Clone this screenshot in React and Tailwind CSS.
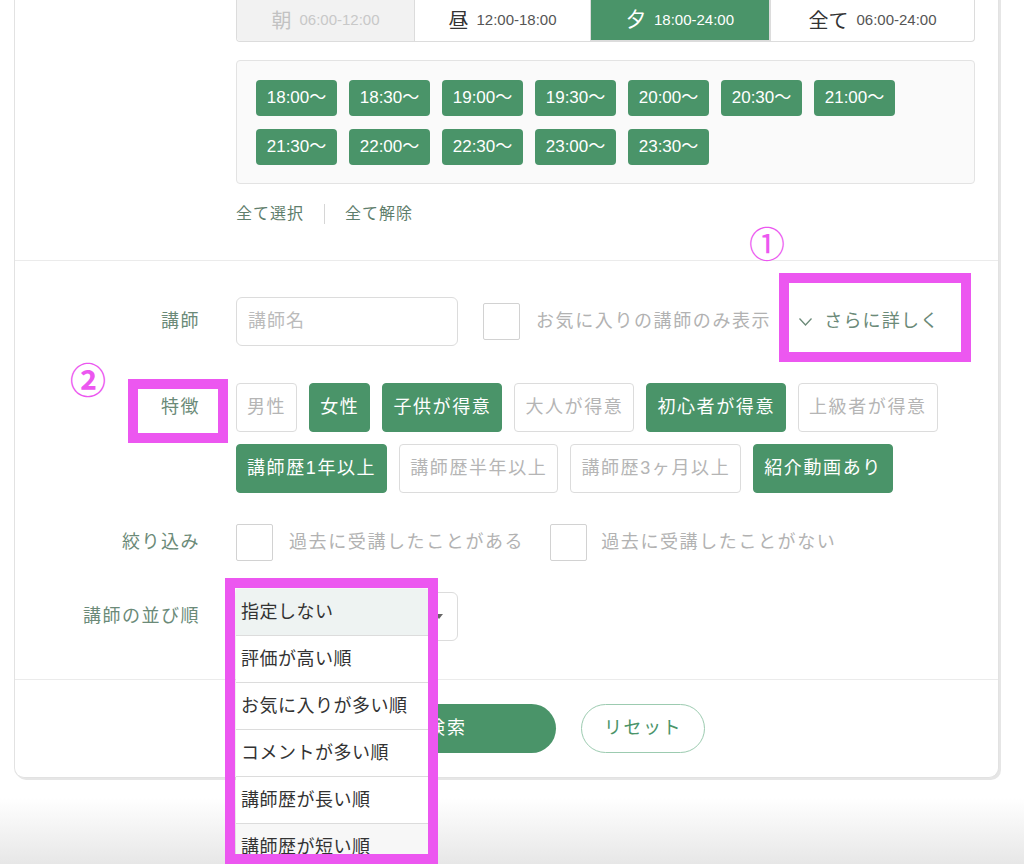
import { useState } from 'react';

const slots = ['18:00〜', '18:30〜', '19:00〜', '19:30〜', '20:00〜', '20:30〜', '21:00〜', '21:30〜', '22:00〜', '22:30〜', '23:00〜', '23:30〜'];

const tabs = [
  { key: 'morning', label: '朝', time: '06:00-12:00', disabled: true, w: 'w-[177px]' },
  { key: 'noon', label: '昼', time: '12:00-18:00', w: 'w-[176px]' },
  { key: 'evening', label: '夕', time: '18:00-24:00', w: 'w-[180px]' },
  { key: 'all', label: '全て', time: '06:00-24:00', w: 'flex-1' },
];

const features = [
  { label: '男性', on: false },
  { label: '女性', on: true },
  { label: '子供が得意', on: true },
  { label: '大人が得意', on: false },
  { label: '初心者が得意', on: true },
  { label: '上級者が得意', on: false },
  { label: '講師歴1年以上', on: true },
  { label: '講師歴半年以上', on: false },
  { label: '講師歴3ヶ月以上', on: false },
  { label: '紹介動画あり', on: true },
];

const sortOptions = ['指定しない', '評価が高い順', 'お気に入りが多い順', 'コメントが多い順', '講師歴が長い順', '講師歴が短い順'];

function Label({ children }) {
  return (
    <div className="flex h-[49px] w-[185px] shrink-0 items-center justify-end text-[18px] tracking-[1.5px] text-[#6b8a78]">
      {children}
    </div>
  );
}

function Checkbox() {
  return <div className="h-[37px] w-[37px] shrink-0 rounded-[2px] border border-[#d2d2d2] bg-white" />;
}

export default function App() {
  const [activeTab, setActiveTab] = useState('evening');
  const [picked, setPicked] = useState(features);

  return (
    <div className="relative h-[864px] w-[1024px] overflow-hidden bg-white font-['Liberation_Sans','Noto_Sans_CJK_JP',sans-serif] text-[#333]">

      {/* bottom fade */}
      <div className="pointer-events-none absolute bottom-0 left-0 h-[66px] w-full bg-gradient-to-b from-white to-[#e7e7e7]" />

      {/* CARD */}
      <div className="relative ml-[14px] -mt-[10px] w-[985px] rounded-b-[10px] border-x border-b border-[#e2e2e2] bg-white shadow-[2px_2px_0_#e6e6e6]">

        {/* TIME */}
        <div className="pb-[36px] pl-[221px] pr-[23px]">
          <div className="flex h-[52px] rounded-b-[4px] border border-t-0 border-[#dcdcdc]">
            {tabs.map((t, i) => {
              const active = activeTab === t.key;
              return (
                <button
                  key={t.key}
                  onClick={() => !t.disabled && setActiveTab(t.key)}
                  className={
                    t.w + ' flex shrink-0 items-center justify-center gap-[8px] pt-[10px] ' +
                    (i > 0 ? 'border-l border-[#dcdcdc] ' : 'rounded-bl-[4px] ') +
                    (t.disabled ? 'bg-[#f2f2f2] ' : '') +
                    (active ? 'border border-t-0 border-[#9ccbb0] bg-[#4a9469] ' : '')
                  }
                >
                  <span className={'text-[20px] ' + (t.disabled ? 'text-[#c2c2c2]' : active ? 'text-white' : 'text-[#333]')}>{t.label}</span>
                  <span className={'text-[15px] ' + (t.disabled ? 'text-[#c8c8c8]' : active ? 'text-white' : 'text-[#555]')}>{t.time}</span>
                </button>
              );
            })}
          </div>

          <div className="mt-[18px] flex flex-wrap gap-x-[12px] gap-y-[13px] rounded-[4px] border border-[#e3e3e3] bg-[#fafafa] px-[19px] pb-[18px] pt-[19px]">
            {slots.map(s => (
              <div key={s} className="flex h-[36px] w-[81px] items-center justify-center rounded-[4px] bg-[#4a9469] text-[17px] text-white">
                {s}
              </div>
            ))}
          </div>

          <div className="mt-[20px] flex h-[20px] items-center text-[16px] tracking-[1px] text-[#5f7e6c]">
            <span>全て選択</span>
            <span className="mx-[20px] h-[20px] w-px bg-[#d6d6d6]" />
            <span>全て解除</span>
          </div>
        </div>

        {/* FORM */}
        <div className="border-t border-[#ebebeb] pb-[38px] pt-[36px]">
          <div className="flex gap-[36px]">
            <Label>講師</Label>
            <div className="flex items-center">
              <div className="flex h-[49px] w-[222px] items-center rounded-[6px] border border-[#dcdcdc] px-[11px] text-[18px] tracking-[1px] text-[#bbb]">
                講師名
              </div>
              <div className="ml-[25px]"><Checkbox /></div>
              <span className="ml-[16px] text-[18px] tracking-[1.6px] text-[#b2b2b2]">お気に入りの講師のみ表示</span>
              <span className="ml-[28px] flex items-center gap-[12px] text-[18px] tracking-[1.2px] text-[#6b8a78]">
                <svg width="13" height="8" viewBox="0 0 13 8" fill="none" stroke="#6b8a78" strokeWidth="1.3">
                  <polyline points="0.5,0.5 6.5,7 12.5,0.5" />
                </svg>
                さらに詳しく
              </span>
            </div>
          </div>

          <div className="mt-[37px] flex gap-[36px]">
            <Label>特徴</Label>
            <div className="flex w-[720px] flex-wrap gap-[12px]">
              {picked.map((f, i) => (
                <button
                  key={f.label}
                  onClick={() => setPicked(picked.map((p, j) => (j === i ? { ...p, on: !p.on } : p)))}
                  className={
                    'flex h-[49px] items-center rounded-[4px] border px-[10px] text-[18px] tracking-[1.6px] ' +
                    (f.on ? 'border-[#4a9469] bg-[#4a9469] text-white' : 'border-[#dcdcdc] bg-white text-[#b5b5b5]')
                  }
                >
                  {f.label}
                </button>
              ))}
            </div>
          </div>

          <div className="mt-[25px] flex gap-[36px]">
            <Label>絞り込み</Label>
            <div className="flex items-center">
              <Checkbox />
              <span className="ml-[16px] text-[18px] tracking-[1.6px] text-[#b2b2b2]">過去に受講したことがある</span>
              <div className="ml-[26px]"><Checkbox /></div>
              <span className="ml-[14px] text-[18px] tracking-[1.6px] text-[#b2b2b2]">過去に受講したことがない</span>
            </div>
          </div>

          <div className="mt-[25px] flex gap-[36px]">
            <Label>講師の並び順</Label>
            <div className="flex h-[49px] w-[222px] items-center justify-end rounded-[6px] border border-[#dcdcdc] pr-[14px]">
              <svg width="8" height="5" viewBox="0 0 8 5"><polygon points="0,0 8,0 4,5" fill="#666" /></svg>
            </div>
          </div>
        </div>

        {/* ACTIONS */}
        <div className="flex gap-[25px] border-t border-[#ebebeb] pb-[24px] pl-[323px] pt-[24px]">
          <button className="h-[49px] w-[218px] rounded-full bg-[#4a9469] text-[18px] tracking-[2px] text-white">検索</button>
          <button className="h-[49px] w-[124px] rounded-full border border-[#9ccbb0] text-[18px] tracking-[1.5px] text-[#4a9469]">リセット</button>
        </div>
      </div>

      {/* SORT DROPDOWN (open) */}
      <div className="absolute left-[236px] top-[589px] w-[192px] bg-white shadow-[0_2px_6px_rgba(0,0,0,0.15)]">
        {sortOptions.map((o, i) => (
          <div
            key={o}
            className={'flex h-[47px] items-center border-b border-[#dcdcdc] pl-[5px] text-[18px] tracking-[0.5px] text-[#333] ' + (i === 0 ? 'bg-[#eef3f2]' : i === 5 ? 'bg-[#f7f7f7]' : 'bg-white')}
          >
            {o}
          </div>
        ))}
      </div>

      {/* ANNOTATIONS */}
      <div className="absolute left-[749px] top-[222px] text-[36px] leading-[48px] text-[#ec57f0]">①</div>
      <div className="absolute left-[70px] top-[358px] text-[36px] font-bold leading-[48px] text-[#ec57f0]">②</div>
      <div className="absolute left-[779px] top-[273px] h-[89px] w-[192px] border-[10px] border-[#ec57f0]" />
      <div className="absolute left-[128px] top-[379px] h-[64px] w-[100px] border-[10px] border-[#ec57f0]" />
      <div className="absolute left-[225px] top-[578px] h-[286px] w-[213px] border-[10px] border-[#ec57f0]" />
    </div>
  );
}
